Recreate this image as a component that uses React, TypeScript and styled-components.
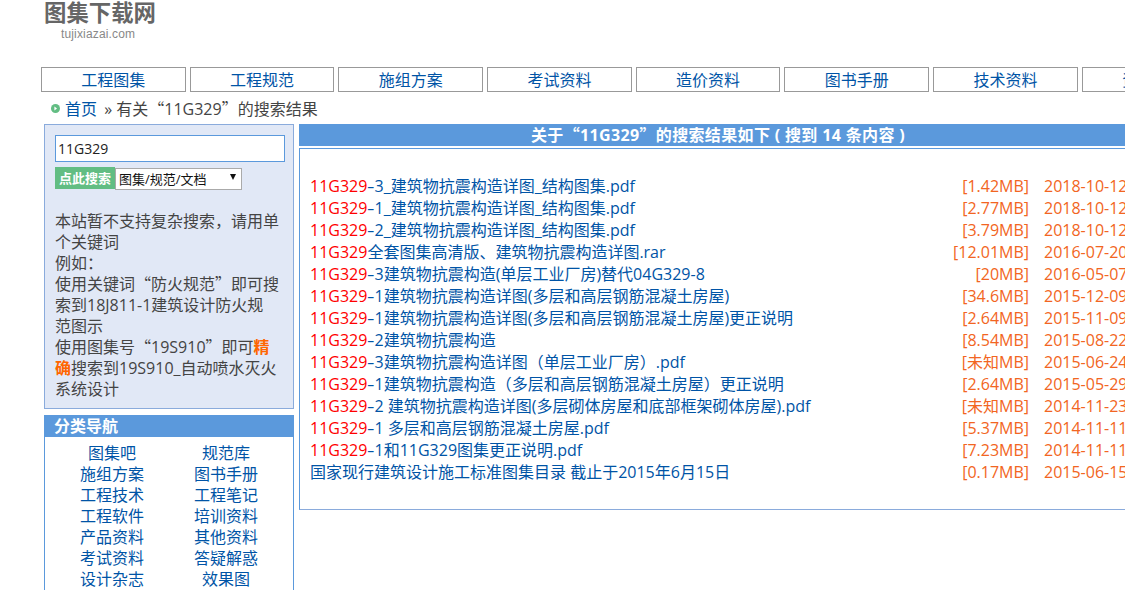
import React from "react";
import styled, { createGlobalStyle } from "styled-components";

const GlobalStyle = createGlobalStyle`
  html, body {
    margin: 0;
    padding: 0;
    height: 590px;
    overflow: hidden;
    background: #fff;
  }
  body {
    font-family: "Open Sans", "Noto Sans CJK SC", sans-serif;
    font-size: 16px;
    color: #444;
  }
`;

const Page = styled.div`
  width: 1137px;
  height: 590px;
  overflow: hidden;
`;

const Logo = styled.div`
  height: 67px;
  padding-left: 44px;
`;

const LogoTitle = styled.div`
  font-family: "Noto Sans CJK SC", sans-serif;
  font-size: 22.4px;
  font-weight: 700;
  line-height: 22px;
  color: #666;
`;

const LogoSub = styled.div`
  margin: 5px 0 0 17px;
  font-family: "Liberation Sans", sans-serif;
  font-size: 12px;
  letter-spacing: 0.15px;
  line-height: 14px;
  color: #888;
`;

const Nav = styled.nav`
  display: flex;
  gap: 4px;
  padding-left: 41px;
`;

const NavItem = styled.a`
  flex: 0 0 144.7px;
  box-sizing: border-box;
  height: 25px;
  border: 1px solid #999;
  font-size: 16px;
  line-height: 25px;
  text-align: center;
  color: #0054a6;
`;

const Crumb = styled.div`
  display: flex;
  align-items: center;
  height: 32px;
  padding-left: 51px;
  font-size: 16px;
  color: #444;
`;

const CrumbDot = styled.svg`
  width: 9px;
  height: 9px;
  margin-right: 5px;
`;

const CrumbLink = styled.a`
  color: #0054a6;
`;

const CrumbText = styled.span`
  margin-left: 3px;
`;

const Quote = styled.span`
  font-family: "Noto Sans CJK SC", sans-serif;
  line-height: 0;
`;

const Columns = styled.div`
  display: flex;
  align-items: flex-start;
  gap: 5px;
  padding-left: 44px;
`;

const Sidebar = styled.aside`
  flex: 0 0 250px;
  min-width: 0;
  display: flex;
  flex-direction: column;
  gap: 6px;
`;

const SearchBox = styled.div`
  box-sizing: border-box;
  height: 285px;
  padding: 10px 8px 10px 10px;
  background: #e1e8f6;
  border: 1px solid #8aabdc;
`;

const SearchInput = styled.input`
  display: block;
  box-sizing: border-box;
  width: 230px;
  height: 27px;
  padding: 0 2px;
  border: 1px solid #5b99dc;
  outline: none;
  background: #fff;
  font-family: "Open Sans", "Noto Sans CJK SC", sans-serif;
  font-size: 14px;
  color: #222;
`;

const SearchRow = styled.div`
  display: flex;
  margin-top: 5px;
  height: 22px;
`;

const SearchButton = styled.button`
  width: 60px;
  padding: 0;
  border: 0;
  background: #62bd83;
  font-family: "Noto Sans CJK SC", sans-serif;
  font-size: 13px;
  font-weight: 700;
  line-height: 22px;
  color: #fff;
`;

const SelectWrap = styled.div`
  position: relative;
  width: 127px;
`;

const TypeSelect = styled.select`
  appearance: none;
  box-sizing: border-box;
  width: 100%;
  height: 22px;
  padding: 0 0 0 3px;
  border: 1px solid #aaa;
  border-radius: 0;
  background: #fff;
  font-family: "Open Sans", "Noto Sans CJK SC", sans-serif;
  font-size: 13px;
  color: #111;
`;

const SelectArrow = styled.span`
  position: absolute;
  right: 6px;
  top: 7px;
  width: 0;
  height: 0;
  border-left: 3.5px solid transparent;
  border-right: 3.5px solid transparent;
  border-top: 6px solid #111;
`;

const Notice = styled.div`
  margin-top: 22px;
  font-size: 16px;
  line-height: 21px;
  color: #444;
`;

const Hot = styled.span`
  color: #f60;
  font-weight: 700;
`;

const NavPanel = styled.section`
  border: 1px solid #5b99dc;
  border-top: 0;
`;

const PanelTitle = styled.h3`
  margin: 0 -1px;
  padding-left: 10px;
  background: #5b99dc;
  font-size: 16px;
  font-weight: 700;
  line-height: 22px;
  color: #fff;
`;

const NavGrid = styled.div`
  display: grid;
  grid-template-columns: 114px 114px;
  grid-auto-rows: 21px;
  padding: 6px 0 0 10px;
`;

const NavGridLink = styled.a`
  font-size: 16px;
  line-height: 21px;
  text-align: center;
  color: #0054a6;
`;

const Results = styled.section`
  flex: 0 0 838px;
`;

const ResultsHeader = styled.h2`
  margin: 0;
  background: #5b99dc;
  font-size: 16px;
  font-weight: 700;
  letter-spacing: 0.35px;
  line-height: 22px;
  text-align: center;
  color: #fff;
`;

const ResultsBox = styled.div`
  box-sizing: border-box;
  height: 362px;
  margin-top: 2px;
  padding: 26px 0 0 10px;
  border: 1px solid #5b99dc;
  border-bottom-color: #8aabdc;
`;

const ResultRow = styled.div`
  display: grid;
  grid-template-columns: 1fr auto 92px;
  column-gap: 15px;
  height: 22px;
  font-size: 16px;
  line-height: 22px;
`;

const ResultName = styled.a`
  color: #0054a6;
`;

const Keyword = styled.span`
  color: #f00;
`;

const Dash = styled.span`
  display: inline-block;
  margin-right: 2px;
  transform: scaleX(1.45);
  transform-origin: left center;
`;

const ResultMeta = styled.span`
  color: #f26522;
  white-space: nowrap;
`;

const navItems = ["工程图集", "工程规范", "施组方案", "考试资料", "造价资料", "图书手册", "技术资料", "资料下载"];

const categories = [
  "图集吧", "规范库",
  "施组方案", "图书手册",
  "工程技术", "工程笔记",
  "工程软件", "培训资料",
  "产品资料", "其他资料",
  "考试资料", "答疑解惑",
  "设计杂志", "效果图",
];

const results = [
  { key: "11G329", rest: "-3_建筑物抗震构造详图_结构图集.pdf", size: "[1.42MB]", date: "2018-10-12" },
  { key: "11G329", rest: "-1_建筑物抗震构造详图_结构图集.pdf", size: "[2.77MB]", date: "2018-10-12" },
  { key: "11G329", rest: "-2_建筑物抗震构造详图_结构图集.pdf", size: "[3.79MB]", date: "2018-10-12" },
  { key: "11G329", rest: "全套图集高清版、建筑物抗震构造详图.rar", size: "[12.01MB]", date: "2016-07-20" },
  { key: "11G329", rest: "-3建筑物抗震构造(单层工业厂房)替代04G329-8", size: "[20MB]", date: "2016-05-07" },
  { key: "11G329", rest: "-1建筑物抗震构造详图(多层和高层钢筋混凝土房屋)", size: "[34.6MB]", date: "2015-12-09" },
  { key: "11G329", rest: "-1建筑物抗震构造详图(多层和高层钢筋混凝土房屋)更正说明", size: "[2.64MB]", date: "2015-11-09" },
  { key: "11G329", rest: "-2建筑物抗震构造", size: "[8.54MB]", date: "2015-08-22" },
  { key: "11G329", rest: "-3建筑物抗震构造详图（单层工业厂房）.pdf", size: "[未知MB]", date: "2015-06-24" },
  { key: "11G329", rest: "-1建筑物抗震构造（多层和高层钢筋混凝土房屋）更正说明", size: "[2.64MB]", date: "2015-05-29" },
  { key: "11G329", rest: "-2 建筑物抗震构造详图(多层砌体房屋和底部框架砌体房屋).pdf", size: "[未知MB]", date: "2014-11-23" },
  { key: "11G329", rest: "-1 多层和高层钢筋混凝土房屋.pdf", size: "[5.37MB]", date: "2014-11-11" },
  { key: "11G329", rest: "-1和11G329图集更正说明.pdf", size: "[7.23MB]", date: "2014-11-11" },
  { key: "", rest: "国家现行建筑设计施工标准图集目录 截止于2015年6月15日", size: "[0.17MB]", date: "2015-06-15" },
];

const App: React.FC = () => {
  return (
    <Page>
      <GlobalStyle />
      <Logo>
        <LogoTitle>图集下载网</LogoTitle>
        <LogoSub>tujixiazai.com</LogoSub>
      </Logo>
      <Nav>
        {navItems.map((item) => (
          <NavItem key={item}>{item}</NavItem>
        ))}
      </Nav>
      <Crumb>
        <CrumbDot viewBox="0 0 9 9">
          <circle cx="4.5" cy="4.5" r="4.5" fill="#62bd83" />
          <path d="M3.4 2.4 L6 4.5 L3.4 6.6 Z" fill="#fff" />
        </CrumbDot>
        <CrumbLink>首页</CrumbLink>
        <CrumbText>
          &nbsp;» 有关<Quote>“</Quote>11G329<Quote>”</Quote>的搜索结果
        </CrumbText>
      </Crumb>
      <Columns>
        <Sidebar>
          <SearchBox>
            <SearchInput defaultValue="11G329" />
            <SearchRow>
              <SearchButton>点此搜索</SearchButton>
              <SelectWrap>
                <TypeSelect defaultValue="all">
                  <option value="all">图集/规范/文档</option>
                </TypeSelect>
                <SelectArrow />
              </SelectWrap>
            </SearchRow>
            <Notice>
              本站暂不支持复杂搜索，请用单个关键词
              <br />
              例如：
              <br />
              使用关键词<Quote>“</Quote>防火规范<Quote>”</Quote>即可搜索到18J811-1建筑设计防火规
              <br />
              范图示
              <br />
              使用图集号<Quote>“</Quote>19S910<Quote>”</Quote>即可<Hot>精确</Hot>搜索到19S910_自动喷水灭火系统设计
            </Notice>
          </SearchBox>
          <NavPanel>
            <PanelTitle>分类导航</PanelTitle>
            <NavGrid>
              {categories.map((item, i) => (
                <NavGridLink key={i}>{item}</NavGridLink>
              ))}
            </NavGrid>
          </NavPanel>
        </Sidebar>
        <Results>
          <ResultsHeader>
            关于<Quote>“</Quote>11G329<Quote>”</Quote>的搜索结果如下 ( 搜到 14 条内容 )
          </ResultsHeader>
          <ResultsBox>
            {results.map((r) => (
              <ResultRow key={r.rest}>
                <ResultName>
                  {r.key && <Keyword>{r.key}</Keyword>}
                  {r.rest.startsWith("-") ? (
                    <>
                      <Dash>-</Dash>
                      {r.rest.slice(1)}
                    </>
                  ) : (
                    r.rest
                  )}
                </ResultName>
                <ResultMeta>{r.size}</ResultMeta>
                <ResultMeta>{r.date}</ResultMeta>
              </ResultRow>
            ))}
          </ResultsBox>
        </Results>
      </Columns>
    </Page>
  );
};

export default App;
